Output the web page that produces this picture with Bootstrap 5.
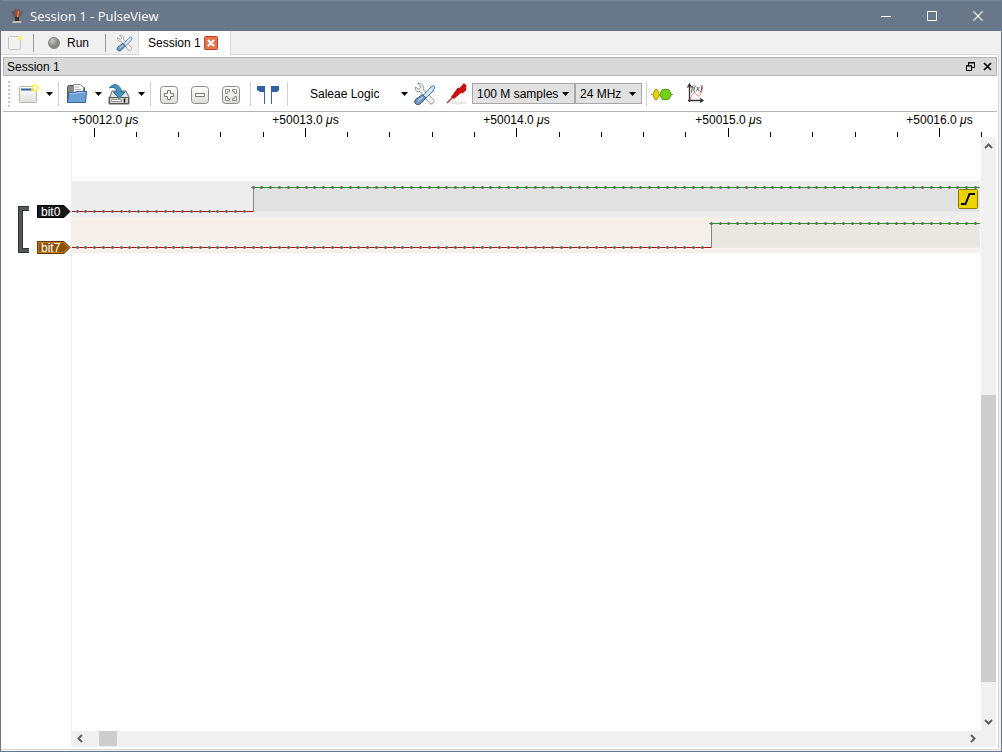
<!DOCTYPE html>
<html lang="en">
<head>
<meta charset="utf-8">
<meta name="viewport" content="width=device-width, initial-scale=1">
<title>Session 1 - PulseView</title>
<link rel="stylesheet" href="https://cdn.jsdelivr.net/npm/bootstrap@5.3.0/dist/css/bootstrap.min.css">
<style>
body{font:12px/16px "Liberation Sans",Arial,sans-serif;color:#000}
button{font:inherit;color:inherit;background:none;border:0;padding:0}
button,.arrow{display:flex;align-items:center;justify-content:center}
svg{display:block;flex:none}
.window{height:100vh;border:1px solid #68778a;border-top:0;background:#f0f0f0;overflow:hidden}
.titlebar{height:31px;background:#68778a;color:#fff;border-top:1px solid #76879b;font:13px/30px "Open Sans","Noto Sans",sans-serif;padding-left:8px}
.titlebar h1{font:inherit;margin:0;padding-left:5px}
.titlebar button{width:46px;height:30px}
.tabstrip{height:24px;padding-left:6px}
.vline{width:1px;height:18px;background:#a0a0a0}
.doc-tab{height:24px;width:93px;background:#fff;border:1px solid #d9d9d9;border-bottom:0;border-top:0;padding-left:9px;gap:3px}
.frame{border:1px solid #d9d9d9;border-left:0;background:#fff;margin:-1px 2px 1px 0;padding:2px 1px 2px 2px;min-height:0}
.frame-top{position:relative;z-index:1}
.dock-title{height:19px;background:#d9d9d9;border:1px solid #b4b4b4;padding:0 4px 0 3px}
.tools{height:36px;border-bottom:1px solid #b4b4b4;padding-left:5px}
.grip{width:2px;height:26px;background:repeating-linear-gradient(#c6c6c6 0 2px,#fff 2px 4px)}
.sep{width:1px;height:24px;background:#d0d0d0}
.drop{width:18px;height:24px}
.combo{appearance:none;height:21px;border:1px solid #a6a6a6;background:#e1e1e1 url("data:image/svg+xml,%3Csvg xmlns='http://www.w3.org/2000/svg' width='7' height='4'%3E%3Cpath d='M0 0h7L3.500 4z'/%3E%3C/svg%3E") no-repeat right 5px center;padding:0 4px;font:inherit;color:#000;border-radius:0}
.device{width:99px;height:24px;padding-left:14px;justify-content:flex-start}
.workspace{display:grid;grid-template-columns:68px minmax(0,1fr) 16px;grid-template-rows:25px minmax(0,1fr) 16px;min-height:0}
.ruler{grid-column:2/4}
.plot{border-left:1px solid #eee;margin-right:1px;min-width:0}
.scroll{background:#f0f0f0}
.vscroll{grid-row:2/4;grid-column:3;margin-right:1px}
.hscroll{grid-column:2;grid-row:3}
.arrow{width:17px;height:17px}
.hscroll .arrow{height:15px}
.thumb-v{width:15px;background:#cdcdcd}
.thumb-h{width:18px;height:15px;background:#cdcdcd}
</style>
</head>
<body>
<div class="window d-flex flex-column">
<header class="titlebar d-flex align-items-center">
<svg width="16" height="18" viewBox="0 0 16 18"><path d="M2 4h3l1-3 2 3 2-3 1 3 3 1-3 5-2 2H6L4 9z" fill="#665f5b"/><path d="M5 4l2 7" stroke="#47569b"/><path d="M7.500 3v8" stroke="#ba3f28" stroke-width="2"/><path d="M9.500 4l-1 7" stroke="#cc8a2f" stroke-width="1.500"/><path d="M6 10h4v4H6z" fill="#333"/><path d="M4 14h8l1 2H3z" fill="#c4bda9"/></svg>
<h1 class="flex-grow-1">Session 1 - PulseView</h1>
<button type="button" aria-label="Minimize"><svg width="10" height="10"><path d="M0 5.500h10" stroke="#fff"/></svg></button>
<button type="button" aria-label="Maximize"><svg width="10" height="10"><path d="M.5.5h9v9h-9z" fill="none" stroke="#fff"/></svg></button>
<button type="button" aria-label="Close"><svg width="10" height="10"><path d="M0 0l10 10M10 0L0 10" stroke="#fff" stroke-width="1.200"/></svg></button>
</header>

<nav class="tabstrip d-flex align-items-center frame-top">
<button type="button" aria-label="New session"><svg width="18" height="16"><rect x="1.500" y="1.500" width="12" height="13" rx="1" fill="#f1f1ef" stroke="#c4c4c2"/><circle cx="13" cy="3" r="2.500" fill="#f7ee8c"/></svg></button>
<span class="vline mx-2"></span>
<button type="button" class="ps-1 gap-1"><svg width="17" height="14"><defs><radialGradient id="ball" cx=".35" cy=".3"><stop stop-color="#c8c8c4"/><stop offset="1" stop-color="#858581"/></radialGradient></defs><circle cx="8" cy="7" r="5.500" fill="url(#ball)" stroke="#888"/></svg><span>Run</span></button>
<span class="vline ms-3 me-2"></span>
<button type="button" aria-label="Settings"><svg width="20" height="18" viewBox="-2 0 26 24"><use href="#tools-icon"/></svg></button>
<div class="doc-tab d-flex align-items-center ms-1"><span>Session 1</span><button type="button" aria-label="Close tab"><svg width="14" height="14"><rect x=".5" y=".5" width="13" height="13" rx="1" fill="#e4764c" stroke="#c93d28"/><path d="M4 4l6 6M10 4l-6 6" stroke="#fff" stroke-width="2.200"/></svg></button></div>
</nav>

<main class="frame d-flex flex-column flex-grow-1">
<div class="dock-title d-flex align-items-center">
<span class="flex-grow-1">Session 1</span>
<button type="button" aria-label="Float" class="me-2"><svg width="9" height="9"><path d="M2.500 3V.5h6v5H6M2 1h7M.5 3.500h5v5h-5zM0 4h6" fill="none" stroke="#000"/></svg></button>
<button type="button" aria-label="Close panel"><svg width="9" height="9"><path d="M1 1l7 7M8 1L1 8" stroke="#000" stroke-width="1.700"/></svg></button>
</div>

<div class="tools d-flex align-items-center">
<span class="grip me-2"></span>
<button type="button" aria-label="New view"><svg width="22" height="24"><defs><linearGradient id="paper" x2="0" y2="1"><stop stop-color="#fff"/><stop offset="1" stop-color="#dededb"/></linearGradient></defs><rect x="1.500" y="4.500" width="17" height="16" rx="1" fill="url(#paper)" stroke="#b5b5b3"/><path d="M3 7.500h13" stroke="#3465a4" stroke-width="2"/><circle cx="17" cy="6" r="4" fill="#fbf34d" opacity=".8"/><circle cx="17" cy="6" r="1.700" fill="#fffef0"/></svg></button>
<button type="button" class="drop" aria-label="New view menu"><svg width="7" height="4"><path d="M0 0h7L3.500 4z"/></svg></button>
<span class="sep me-2"></span>
<button type="button" aria-label="Open"><svg width="22" height="24" viewBox="1 -1 22 24"><path d="M1.500 19V3.500l1-1h5l2 2h9V19z" fill="#888" stroke="#555753"/><path d="M7.500 10V1.500h7l3 3V10z" fill="#f7f7f7" stroke="#888"/><path d="M9 4h4M9 6.500h6M9 9h6" stroke="#b5b5b5"/><path d="M3 9.500h6l2-1h9.500l-1 11h-18z" fill="#6d9fd3" stroke="#3465a4"/><path d="M4 10.500h6l2-1h7" fill="none" stroke="#a9c9e8"/></svg></button>
<button type="button" class="drop" aria-label="Open menu"><svg width="7" height="4"><path d="M0 0h7L3.500 4z"/></svg></button>
<button type="button" aria-label="Save"><svg width="25" height="24" viewBox="0 -1 25 24"><path d="M3 14L5 8h14l3 6v7H2v-7z" fill="#e3e3e1" stroke="#686864"/><path d="M2.500 14.500h19v6h-19z" fill="#d2d2cf" stroke="#555753"/><path d="M4.500 16.500h10v2h-10z" fill="#fff" stroke="#999"/><path d="M17.500 15.500v4" stroke="#111" stroke-width="1.500"/><path d="M2.500 5C5 .5 13-.5 14.500 9H18l-6 6.500L6.500 9H10C9.500 5 6 3.500 2.500 5z" fill="#4b91be" stroke="#206c9c"/></svg></button>
<button type="button" class="drop" aria-label="Save menu"><svg width="7" height="4"><path d="M0 0h7L3.500 4z"/></svg></button>
<span class="sep me-2"></span>
<svg width="0" height="0"><defs><linearGradient id="key" x2="0" y2="1"><stop stop-color="#fff"/><stop offset="1" stop-color="#dcdcda"/></linearGradient>
<g id="tools-icon"><path d="M5 1.500L8 5 6 7.500 2.500 5C1.500 8 4 10.500 7 9.500L17 21.500C19.500 23 22.500 20 20.500 17.500L10.500 8C11.500 4 9 1 5 1.500z" fill="#f3f3f1" stroke="#969893"/><path d="M20 3.500l2 1.500-2 4-7 7-3-2.500 7-7.500z" fill="#d5e4f2" stroke="#477ab0"/><path d="M9.500 12.500l3.500 3.500-6 6c-3 2-7-1-4.500-4.500z" fill="#6f94bd" stroke="#2e5680"/><path d="M5 19l5-4" stroke="#b7cce4" stroke-width="1.500"/></g></defs></svg>
<button type="button" aria-label="Zoom in"><svg width="21" height="24"><rect x="1.500" y="4.500" width="17" height="17" rx="3" fill="url(#key)" stroke="#8b8b88"/><path d="M8.500 8.500h3v3h3v3h-3v3h-3v-3h-3v-3h3z" fill="#fff" stroke="#777"/></svg></button>
<button type="button" class="ms-2" aria-label="Zoom out"><svg width="23" height="24"><rect x="3.500" y="4.500" width="17" height="17" rx="3" fill="url(#key)" stroke="#8b8b88"/><path d="M7.500 11.500h9v3h-9z" fill="#fff" stroke="#777"/></svg></button>
<button type="button" class="ms-2" aria-label="Zoom to fit"><svg width="23" height="24"><rect x="3.500" y="4.500" width="17" height="17" rx="3" fill="url(#key)" stroke="#8b8b88"/><path d="M6.500 11.500v-4h4v2h-2v2zM13.500 7.500h4v4h-2v-2h-2zM6.500 14.500h2v2h2v2h-4zM15.500 14.500h2v4h-4v-2h2z" fill="#fff" stroke="#777" stroke-width=".8"/></svg></button>
<span class="sep ms-2 me-1"></span>
<button type="button" aria-label="Show cursors"><svg width="24" height="24" viewBox="-2 -1 24 24"><path d="M7.500 3v18M14.500 3v18" stroke="#3465a4"/><path d="M0 3h8v6H3L0 7zM14 3h8v4l-2 2h-6z" fill="#2f62a5"/></svg></button>
<span class="sep ms-2"></span>
<button type="button" class="device ms-2">Saleae Logic</button>
<button type="button" class="drop" aria-label="Device menu"><svg width="7" height="4"><path d="M0 0h7L3.500 4z"/></svg></button>
<button type="button" aria-label="Configure device"><svg width="24" height="24"><use href="#tools-icon"/></svg></button>
<button type="button" class="ms-2" aria-label="Configure channels"><svg width="23" height="24"><ellipse cx="13" cy="21" rx="9" ry="1.500" fill="#e8e8e8"/><path d="M2 21l7-7" stroke="#a33" stroke-width="1.500"/><path d="M6.500 15l6.500-9 1.500.5L19 1.500l2.500 2.500-1 1 .5 3-3.500 3-1.500-.5-7 6z" fill="#d40b0b" stroke="#a40000" stroke-width=".7"/></svg></button>
<select class="combo ms-1" style="width:103px" aria-label="Sample count"><option>100 M samples</option></select>
<select class="combo" style="width:67px" aria-label="Sample rate"><option>24 MHz</option></select>
<span class="sep ms-1 me-1"></span>
<button type="button" aria-label="Add decoder"><svg width="22" height="24"><path d="M0 12.500h22" stroke="#888"/><path d="M2 12.500L4 7.500h2l2.500 5-2.500 5H4z" fill="#edd400" stroke="#a99500"/><path d="M8.500 12.500l3-5h6l3 5-3 5h-6z" fill="#73d216" stroke="#4e9a06"/></svg></button>
<button type="button" class="ms-2 ps-1" aria-label="Add math signal"><svg width="20" height="24" viewBox="-2 0 20 24"><path d="M2.500 3v17M1 18.500h15M.5 5.500L2.500 2l2 3.500M13 16.500l3 2-3 2" stroke="#333" fill="none" stroke-width="1.300"/><path d="M3 18C6 9 8 10 10 13s4 1 6-10" fill="none" stroke="#ef7777"/><text x="4" y="9" font-size="8" font-style="italic" font-family="Liberation Serif,serif">f(x)</text></svg></button>
</div>

<div class="workspace flex-grow-1">
<svg class="ruler" id="ruler" width="100%" height="25" role="img" aria-label="Time ruler"></svg>
<svg width="68" height="120" style="grid-row:2;grid-column:1">
<path d="M26 71.500H17.500v42H26" fill="none" stroke="#2e3436" stroke-width="5"/><path d="M26 71.500H17.500v42H26" fill="none" stroke="#555753" stroke-width="3"/>
<path d="M34.500 68.500H61l6 6-6 6H34.500z" fill="#171a1b" stroke="#000"/><path d="M34.500 104.500H61l6 6-6 6H34.500z" fill="#8f5202" stroke="#5c3501"/><path d="M35.500 105.500H60.500l5 5-5 5h-25z" fill="none" stroke="#ce7b12"/>
<g fill="#fff" font-size="12"><text x="38" y="79">bit0</text><text x="38" y="115">bit7</text></g>
</svg>
<div class="plot"><svg id="plot" width="100%" height="120" role="img" aria-label="Logic traces bit0 and bit7"></svg></div>
<div class="scroll vscroll d-flex flex-column align-items-center">
<button type="button" class="arrow" aria-label="Scroll up"><svg width="9" height="6"><path d="M1 5l3.500-3.500L8 5" fill="none" stroke="#606060" stroke-width="2"/></svg></button>
<div class="w-100 flex-grow-1 d-flex flex-column"><span style="flex:241"></span><span class="thumb-v" style="flex:286"></span><span style="flex:31"></span></div>
<button type="button" class="arrow" aria-label="Scroll down"><svg width="9" height="6"><path d="M1 1l3.500 3.500L8 1" fill="none" stroke="#606060" stroke-width="2"/></svg></button>
<span class="arrow"></span>
</div>
<div class="scroll hscroll d-flex">
<button type="button" class="arrow" aria-label="Scroll left"><svg width="6" height="9"><path d="M5 1L1.500 4.500 5 8" fill="none" stroke="#606060" stroke-width="2"/></svg></button>
<span style="flex:11"></span><span class="thumb-h"></span><span style="flex:845"></span>
<button type="button" class="arrow" aria-label="Scroll right"><svg width="6" height="9"><path d="M1 1l3.500 3.500L1 8" fill="none" stroke="#606060" stroke-width="2"/></svg></button>
</div>
</div>
</main>
</div>
<script src="https://cdn.jsdelivr.net/npm/bootstrap@5.3.0/dist/js/bootstrap.bundle.min.js"></script>
<script>
// One microsecond of the time axis, in pixels, and the first major tick.
const unit = 211.4, firstTick = 23, sample = unit / 24;
const ruler = document.getElementById('ruler'), plot = document.getElementById('plot');

function drawRuler() {
  const width = ruler.clientWidth;
  let out = '';
  for (let i = 0; firstTick + i * unit / 5 < width - 2; i++) {
    const x = Math.floor(firstTick + i * unit / 5) + 0.5, major = i % 5 === 0;
    out += `<path d="M${x} ${major ? 16 : 20}V25" stroke="#000"/>`;
    if (major) out += `<text x="${Math.max(34, x)}" y="12" text-anchor="middle">+${50012 + i / 5}.0 <tspan font-style="italic">μ</tspan>s</text>`;
  }
  ruler.innerHTML = out;
}

function drawTrace(top, edge, band, high) {
  const width = plot.clientWidth, hi = top + 6.5, lo = top + 30.5, x = Math.floor(5.5 + edge * sample) + 0.5;
  let out = `<rect y="${top}" width="100%" height="36" fill="${band}"/><rect x="${x}" y="${hi}" width="100%" height="24" fill="${high}"/>
    <path d="M0 ${lo}H${x}" stroke="#c00000"/><path d="M${x} ${hi}V${lo}" stroke="#888"/><path d="M${x} ${hi}H${width}" stroke="#00b000"/>`;
  for (let i = 0; 5 + i * sample < width; i++) {
    const cx = Math.floor(4 + i * sample), y = i < edge ? lo : hi;
    out += `<path d="M${cx} ${y}h3" stroke="#777" stroke-opacity=".55" stroke-width="3"/><path d="M${cx - 1} ${y}h5" stroke="#666" stroke-opacity=".8"/><path d="M${cx + 1} ${y}h1" stroke="#555" stroke-width="3" stroke-opacity=".6"/>`;
  }
  return out;
}

function draw() {
  drawRuler();
  plot.innerHTML = drawTrace(44, 20, '#ededed', '#e1e1e1') + drawTrace(80, 72, '#f5f0ea', '#eae6e0') +
    `<svg x="100%" overflow="visible"><g transform="translate(-22 52)"><rect x=".5" y=".5" width="19" height="19" rx="1" fill="#edd400" stroke="#8a7a00"/><path d="M3 15h4.500l4-10h5.500" fill="none" stroke="#000" stroke-width="2"/></g></svg>`;
}
draw();
addEventListener('resize', draw);
</script>
</body>
</html>
